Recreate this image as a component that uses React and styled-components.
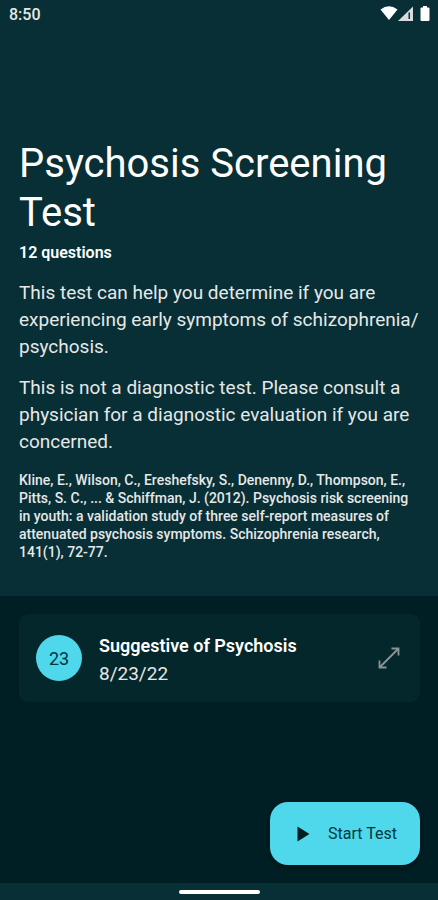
import React from "react";
import styled, { createGlobalStyle } from "styled-components";

const GlobalStyle = createGlobalStyle`
  *, *::before, *::after { box-sizing: border-box; }
  body {
    margin: 0;
    background: #001f24;
    font-family: Roboto, "Noto Sans", sans-serif;
  }
  h1, h2, p { margin: 0; }
`;

const Screen = styled.div`
  min-height: 100vh;
  display: flex;
  flex-direction: column;
  color: #e6e8e8;
`;

const Intro = styled.header`
  background: #072f35;
  padding-bottom: 35px;
`;

const StatusBar = styled.div`
  display: flex;
  align-items: center;
  justify-content: space-between;
  height: 28px;
  padding: 0 8px 0 9px;
  font-size: 16px;
  font-weight: 500;
`;

const StatusIcons = styled.svg`
  display: block;
  width: 50px;
  height: 18px;
`;

const Copy = styled.div`
  padding: 111px 16px 0 19px;
`;

const Title = styled.h1`
  color: #fff;
  font-size: 40px;
  font-weight: 400;
  line-height: 49px;
`;

const Count = styled.p`
  margin-top: 6px;
  color: #fff;
  font-size: 16px;
  font-weight: 600;
  line-height: 20px;
`;

const Paragraph = styled.p`
  margin-top: ${({ $gap }) => $gap}px;
  font-size: 19px;
  font-weight: 400;
  line-height: 27px;
`;

const Citation = styled.p`
  margin-top: 16px;
  font-size: 14px;
  font-weight: 500;
  line-height: 18px;
`;

const Results = styled.main`
  flex: 1;
  display: flex;
  flex-direction: column;
  background: #001f24;
  padding: 18px 18px 18px 19px;
`;

const Card = styled.article`
  display: flex;
  align-items: center;
  gap: 17px;
  min-height: 88px;
  padding: 0 18px 0 17px;
  border-radius: 9px;
  background: #04272c;
`;

const Score = styled.span`
  display: grid;
  place-items: center;
  flex: none;
  width: 46px;
  height: 46px;
  border-radius: 50%;
  background: #4fd8eb;
  color: #00363d;
  font-size: 18px;
`;

const Details = styled.div`
  flex: 1;
  min-width: 0;
  padding-top: 3px;
`;

const ResultName = styled.h2`
  color: #fff;
  font-size: 18px;
  font-weight: 600;
  line-height: 28px;
`;

const ResultDate = styled.p`
  font-size: 19px;
  line-height: 28px;
`;

const ExpandButton = styled.button`
  display: grid;
  place-items: center;
  width: 26px;
  height: 26px;
  padding: 0;
  border: 0;
  background: none;
  color: #8d9294;
  cursor: pointer;
`;

const StartButton = styled.button`
  display: flex;
  align-items: center;
  gap: 13px;
  align-self: flex-end;
  margin-top: auto;
  height: 63px;
  padding: 0 23px;
  border: 0;
  border-radius: 18px;
  background: #4fd8eb;
  color: #00363d;
  font-family: inherit;
  font-size: 16px;
  font-weight: 400;
  box-shadow: 0 2px 5px rgba(0, 0, 0, 0.5);
  cursor: pointer;
`;

const NavBar = styled.footer`
  display: flex;
  justify-content: center;
  height: 17px;
  padding-top: 7px;
  background: #072f35;
`;

const NavHandle = styled.div`
  width: 81px;
  height: 4px;
  border-radius: 2px;
  background: #fff;
`;

export default function App() {
  return (
    <>
      <GlobalStyle />
      <Screen>
        <Intro>
          <StatusBar>
            <span>8:50</span>
            <StatusIcons viewBox="0 0 50 18" fill="#fff" aria-hidden="true">
              <path d="M.5 4.500Q9 -2 17.500 4.500L9 15Z" />
              <path d="M18 16 33 1.500v14.500Z" fill="#d9dcdc" />
              <path d="M28.500 7.500h1.500v6.500h-1.500Z" fill="#072f35" />
              <path d="M41.500 2.500h1.500V1h4v1.500h1.500q1 0 1 1v11.500q0 1-1 1h-7q-1 0-1-1v-11.500q0-1 1-1Z" />
            </StatusIcons>
          </StatusBar>
          <Copy>
            <Title>Psychosis Screening Test</Title>
            <Count>12 questions</Count>
            <Paragraph $gap={16}>
              This test can help you determine if you are experiencing early
              symptoms of schizophrenia/
              <br />
              psychosis.
            </Paragraph>
            <Paragraph $gap={14}>
              This is not a diagnostic test. Please consult a physician for a
              diagnostic evaluation if you are concerned.
            </Paragraph>
            <Citation>
              Kline, E., Wilson, C., Ereshefsky, S., Denenny, D., Thompson, E.,
              Pitts, S. C., ... &amp; Schiffman, J. (2012). Psychosis risk
              screening
              <br />
              in youth: a validation study of three self-report measures of
              attenuated psychosis symptoms. Schizophrenia research,
              <br />
              141(1), 72-77.
            </Citation>
          </Copy>
        </Intro>
        <Results>
          <Card>
            <Score>23</Score>
            <Details>
              <ResultName>Suggestive of Psychosis</ResultName>
              <ResultDate>8/23/22</ResultDate>
            </Details>
            <ExpandButton aria-label="Expand result">
              <svg width="26" height="26" viewBox="0 0 26 26" fill="none" stroke="currentColor" strokeWidth="1.800" aria-hidden="true">
                <path d="M3.500 22.500 22.500 3.500M15.500 3.500h7v7M3.500 15.500v7h7" />
              </svg>
            </ExpandButton>
          </Card>
          <StartButton>
            <svg width="22" height="22" viewBox="0 0 22 22" fill="#001f24" aria-hidden="true">
              <path d="M4.500 3.500v15L16.500 11Z" />
            </svg>
            Start Test
          </StartButton>
        </Results>
        <NavBar>
          <NavHandle />
        </NavBar>
      </Screen>
    </>
  );
}
